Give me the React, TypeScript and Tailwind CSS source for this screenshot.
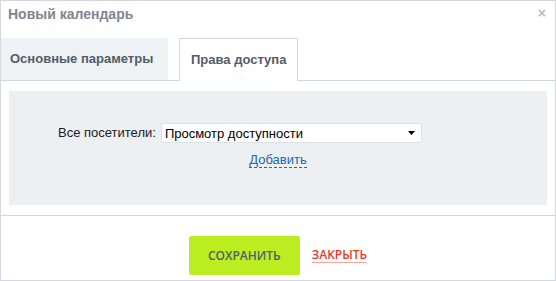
export default function App() {
  return (
    <div className="w-[556px] h-[281px] border border-[#d5d7da] bg-white flex flex-col font-['Liberation_Sans',Arial,sans-serif]">
      {/* Header */}
      <div className="h-[37px] flex items-start justify-between pl-[7px] pr-[9px] pt-[5px]">
        <span className="text-[14px] leading-[16px] font-bold text-[#80868e]">Новый календарь</span>
        <span className="text-[14px] font-bold text-[#b9bcc0] leading-[14px]">×</span>
      </div>

      {/* Tabs */}
      <div className="h-[43px] flex items-end gap-[11px] border-b border-[#d5d7da]">
        <div className="h-[42px] w-[167px] flex items-center pl-[9px] bg-[#eef2f4] text-[13px] font-bold text-[#535c69]">
          Основные параметры
        </div>
        <div className="h-[43px] -mb-px flex items-center px-[11px] bg-white border border-b-0 border-[#d5d7da] text-[13px] font-bold text-[#535c69]">
          Права доступа
        </div>
      </div>

      {/* Panel */}
      <div className="mx-[8px] mt-[10px] h-[114px] bg-[#edf0f3] pt-[32px]">
        <div className="flex items-center gap-[5px] pl-[49px]">
          <span className="text-[13px] text-[#1a1a1a]">Все посетители:</span>
          <div className="w-[261px] h-[20px] flex items-center justify-between pl-[3px] pr-[6px] bg-white border border-[#dfe2e5] rounded-[2px]">
            <span className="text-[13px] text-black leading-none">Просмотр доступности</span>
            <svg width="7" height="4" viewBox="0 0 7 4">
              <path d="M0 0h7L3.5 4z" fill="#000" />
            </svg>
          </div>
        </div>
        <div className="flex justify-center mt-[9px]">
          <span className="text-[13px] leading-[15px] text-[#2067b0] border-b border-dashed border-[#2067b0]">Добавить</span>
        </div>
      </div>

      {/* Footer */}
      <div className="mt-[10px] border-t border-[#d5d7da] flex justify-center items-center gap-[12px] pt-[20px]">
        <button className="w-[111px] h-[39px] rounded-[2px] bg-[#bbed21] font-['Open_Sans',sans-serif] text-[12px] font-semibold text-[#535c69]">
          СОХРАНИТЬ
        </button>
        <span className="font-['Open_Sans',sans-serif] text-[12px] font-semibold text-[#f1361b] leading-[14px] border-b border-[#f7a79b]">
          ЗАКРЫТЬ
        </span>
      </div>
    </div>
  )
}
